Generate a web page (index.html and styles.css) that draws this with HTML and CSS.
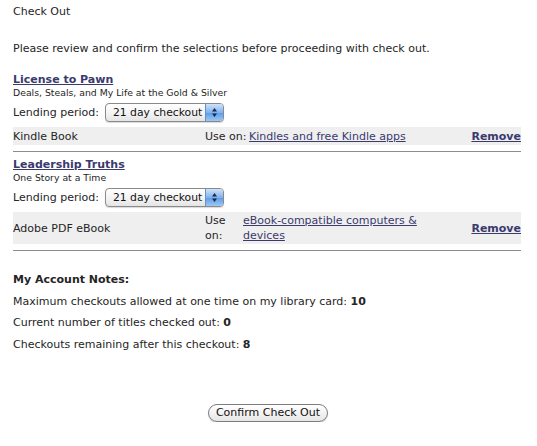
FILE: index.html
```html
<!DOCTYPE html>
<html>
<head>
<meta charset="utf-8">
<link rel="stylesheet" href="styles.css">
</head>
<body>
<div class="page">
  <h1 class="title">Check Out</h1>
  <p class="intro">Please review and confirm the selections before proceeding with check out.</p>

  <div class="item">
    <a class="book-title" href="#">License to Pawn</a>
    <div class="subtitle">Deals, Steals, and My Life at the Gold &amp; Silver</div>
    <div class="lending">
      <span class="lending-label">Lending period:</span>
      <span class="select-wrap">
        <select class="select"><option>21 day checkout</option></select>
        <span class="select-cap"><svg width="7" height="11" viewBox="0 0 7 11"><path d="M3.5 1 L6 4.5 H1 Z M3.5 10 L6 6.5 H1 Z" fill="#1b2a4a"/></svg></span>
      </span>
    </div>
    <div class="format-row row-one">
      <span class="format">Kindle Book</span>
      <span class="use-on">Use on:</span>
      <a class="device-link" href="#">Kindles and free Kindle apps</a>
      <a class="remove" href="#">Remove</a>
    </div>
    <hr class="divider">
  </div>

  <div class="item item-two">
    <a class="book-title" href="#">Leadership Truths</a>
    <div class="subtitle">One Story at a Time</div>
    <div class="lending">
      <span class="lending-label">Lending period:</span>
      <span class="select-wrap">
        <select class="select"><option>21 day checkout</option></select>
        <span class="select-cap"><svg width="7" height="11" viewBox="0 0 7 11"><path d="M3.5 1 L6 4.5 H1 Z M3.5 10 L6 6.5 H1 Z" fill="#1b2a4a"/></svg></span>
      </span>
    </div>
    <div class="format-row row-two">
      <span class="format">Adobe PDF eBook</span>
      <span class="use-on">Use on:</span>
      <a class="device-link" href="#">eBook-compatible computers &amp; devices</a>
      <a class="remove" href="#">Remove</a>
    </div>
    <hr class="divider">
  </div>

  <div class="notes">
    <div class="notes-head">My Account Notes:</div>
    <div class="note">Maximum checkouts allowed at one time on my library card: <b>10</b></div>
    <div class="note">Current number of titles checked out: <b>0</b></div>
    <div class="note">Checkouts remaining after this checkout: <b>8</b></div>
  </div>

  <div class="actions">
    <button class="confirm" type="button">Confirm Check Out</button>
  </div>
</div>
</body>
</html>
```

FILE: styles.css
```css
html, body {
  margin: 0;
  padding: 0;
  background: #fff;
}
body {
  font-family: "DejaVu Sans", Verdana, sans-serif;
  font-size: 11px;
  color: #252525;
}
.page {
  width: 508px;
  padding: 4px 0 0 13px;
}
.title {
  font-size: 11px;
  font-weight: normal;
  margin: 0;
  line-height: 16px;
}
.intro {
  margin: 21px 0 0;
  line-height: 16px;
}
.item {
  margin-top: 15px;
}
.item-two {
  margin-top: 5px;
}
.book-title {
  display: block;
  font-weight: bold;
  color: #3a3a6e;
  text-decoration: underline;
  line-height: 16px;
}
.subtitle {
  font-size: 9.3px;
  line-height: 10px;
  color: #1e1e1e;
}
.lending {
  display: flex;
  align-items: center;
  gap: 6px;
  margin-top: 5px;
  height: 19px;
}
.lending-label {
  line-height: 16px;
}
.select-wrap {
  position: relative;
  display: inline-block;
  width: 119px;
  height: 19px;
}
.select {
  -webkit-appearance: none;
  appearance: none;
  width: 119px;
  height: 19px;
  margin: 0;
  border: 1px solid #8a8a8a;
  border-radius: 4px;
  background: linear-gradient(#ffffff, #f2f2f2 60%, #e4e4e4);
  font-family: "DejaVu Sans", Verdana, sans-serif;
  font-size: 10.8px;
  color: #111;
  padding: 0 0 0 7px;
  box-shadow: 0 1px 1px rgba(0,0,0,0.15);
}
.select-cap {
  position: absolute;
  right: 1px;
  top: 1px;
  width: 17px;
  height: 17px;
  border-radius: 0 3px 3px 0;
  background: linear-gradient(#cfe3fb, #7fb2ee 50%, #5b9ae6 51%, #9cc8f6);
  border-left: 1px solid #6a8fc0;
  display: flex;
  align-items: center;
  justify-content: center;
}
.format-row {
  display: grid;
  align-items: center;
  background: #efefef;
  margin-top: 5px;
}
.row-one {
  grid-template-columns: 192px 44px 1fr auto;
  height: 18px;
}
.row-two {
  grid-template-columns: 192px 38px 190px 1fr;
  height: 32px;
  margin-top: 5px;
}
.use-on {
  line-height: 15px;
}
.row-two .use-on {
  width: 30px;
}
.device-link {
  color: #3a3a6e;
  text-decoration: underline;
  line-height: 15px;
}
.row-two .device-link {
  width: 180px;
}
.remove {
  color: #3a3a6e;
  font-weight: bold;
  text-decoration: underline;
  justify-self: end;
}
.divider {
  border: 0;
  border-top: 1px solid #8c8c8c;
  margin: 6px 0 0;
  height: 0;
}
.notes {
  margin-top: 21px;
}
.notes-head {
  font-weight: bold;
  line-height: 16px;
}
.note {
  line-height: 16px;
  margin-top: 5.6px;
}
.actions {
  display: flex;
  justify-content: center;
  margin-top: 51px;
  padding-left: 2px;
}
.confirm {
  font-family: "DejaVu Sans", Verdana, sans-serif;
  font-size: 11px;
  color: #111;
  width: 120px;
  height: 18px;
  padding: 0;
  border: 1px solid #7d7d7d;
  border-radius: 9px;
  background: linear-gradient(#ffffff, #f3f3f3 50%, #e6e6e6);
  box-shadow: 0 1px 1px rgba(0,0,0,0.2);
}
```
